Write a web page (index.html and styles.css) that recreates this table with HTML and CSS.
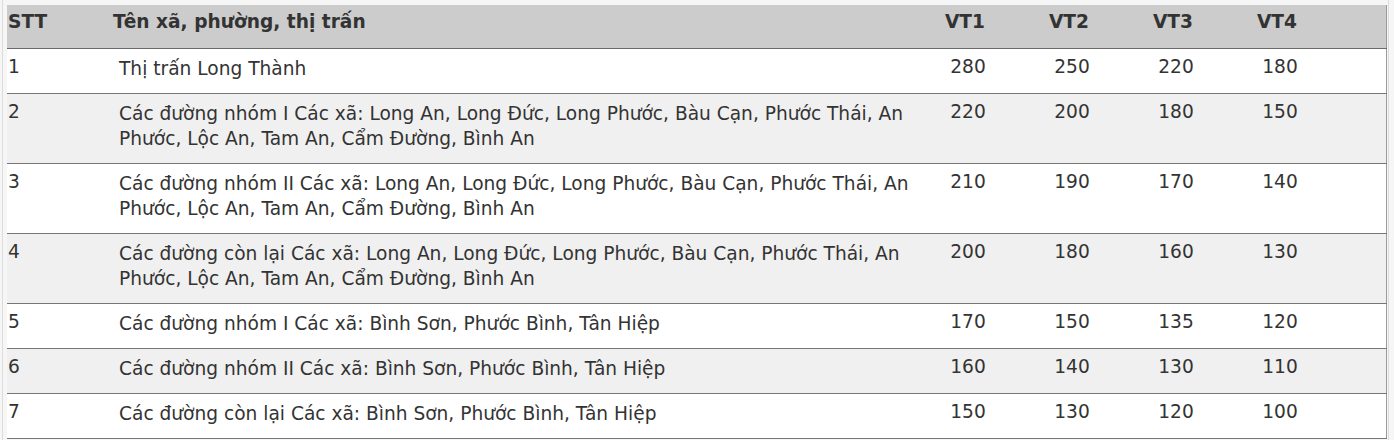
FILE: index.html
```html
<!DOCTYPE html>
<html lang="vi">
<head>
<meta charset="utf-8">
<link rel="stylesheet" href="styles.css">
</head>
<body>
<div class="frame">
<table class="price">
  <colgroup>
    <col class="c-stt"><col class="c-name"><col class="c-vt"><col class="c-vt"><col class="c-vt"><col class="c-vt"><col class="c-rest">
  </colgroup>
  <thead>
    <tr><th class="stt">STT</th><th class="name">Tên xã, phường, thị trấn</th><th class="vt">VT1</th><th class="vt">VT2</th><th class="vt">VT3</th><th class="vt">VT4</th><th></th></tr>
  </thead>
  <tbody>
    <tr><td class="stt">1</td><td class="name">Thị trấn Long Thành</td><td class="vt">280</td><td class="vt">250</td><td class="vt">220</td><td class="vt">180</td><td></td></tr>
    <tr class="alt"><td class="stt">2</td><td class="name">Các đường nhóm I Các xã: Long An, Long Đức, Long Phước, Bàu Cạn, Phước Thái, An Phước, Lộc An, Tam An, Cẩm Đường, Bình An</td><td class="vt">220</td><td class="vt">200</td><td class="vt">180</td><td class="vt">150</td><td></td></tr>
    <tr><td class="stt">3</td><td class="name">Các đường nhóm II Các xã: Long An, Long Đức, Long Phước, Bàu Cạn, Phước Thái, An Phước, Lộc An, Tam An, Cẩm Đường, Bình An</td><td class="vt">210</td><td class="vt">190</td><td class="vt">170</td><td class="vt">140</td><td></td></tr>
    <tr class="alt"><td class="stt">4</td><td class="name">Các đường còn lại Các xã: Long An, Long Đức, Long Phước, Bàu Cạn, Phước Thái, An Phước, Lộc An, Tam An, Cẩm Đường, Bình An</td><td class="vt">200</td><td class="vt">180</td><td class="vt">160</td><td class="vt">130</td><td></td></tr>
    <tr><td class="stt">5</td><td class="name">Các đường nhóm I Các xã: Bình Sơn, Phước Bình, Tân Hiệp</td><td class="vt">170</td><td class="vt">150</td><td class="vt">135</td><td class="vt">120</td><td></td></tr>
    <tr class="alt"><td class="stt">6</td><td class="name">Các đường nhóm II Các xã: Bình Sơn, Phước Bình, Tân Hiệp</td><td class="vt">160</td><td class="vt">140</td><td class="vt">130</td><td class="vt">110</td><td></td></tr>
    <tr><td class="stt">7</td><td class="name">Các đường còn lại Các xã: Bình Sơn, Phước Bình, Tân Hiệp</td><td class="vt">150</td><td class="vt">130</td><td class="vt">120</td><td class="vt">100</td><td></td></tr>
  </tbody>
</table>
</div>
</body>
</html>
```
FILE: styles.css
```css
html, body {
  margin: 0;
  padding: 0;
  background: #f6f6f6;
}
body {
  font-family: "DejaVu Sans", Verdana, sans-serif;
  color: #333;
}
.frame {
  margin-left: 2px;
  width: 1387px;
  height: 440px;
  box-sizing: border-box;
  border-left: 1px solid #dcdcdc;
  border-right: 1px solid #dcdcdc;
  padding: 5px 2px 0 4px;
}
.price {
  width: 1379px;
  border-collapse: collapse;
  table-layout: fixed;
  background: #fff;
  border-right: 1px solid #9a9a9a;
  font-size: 18.6px;
  line-height: 25px;
}
.c-stt { width: 103px; }
.c-name { width: 806px; }
.c-vt { width: 104px; }
.c-rest { width: 54px; }
.price th {
  background: #cccccc;
  font-weight: bold;
  text-align: left;
  padding: 4px 0 14px;
  border-bottom: 1px solid #6a6a6a;
}
.price th.stt { padding-left: 1px; }
.price th.name { padding-left: 3px; }
.price th.vt { text-align: center; padding-right: 6px; }
.price td {
  vertical-align: top;
  padding: 5px 0 14px;
  border-bottom: 1px solid #777;
}
.price td.stt { padding-left: 1px; }
.price td.name { padding: 7px 0 12px 9px; }
.price td.vt { text-align: center; }
.price tr.alt td { background: #f0f0f0; }
```
